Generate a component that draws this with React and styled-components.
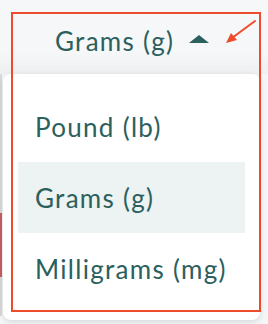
import React from "react";
import styled, { createGlobalStyle } from "styled-components";

const Global = createGlobalStyle`
  html, body {
    margin: 0;
    padding: 0;
    background: #f5f6f8;
  }
  body {
    font-family: "Lato", "Open Sans", sans-serif;
  }
`;

const Page = styled.div`
  position: relative;
  width: 268px;
  height: 324px;
  overflow: hidden;
  background: #f5f6f8;
  display: flex;
  flex-direction: column;
`;

const Header = styled.div`
  height: 74px;
  display: flex;
  align-items: center;
  padding: 8px 0 0 55px;
  box-sizing: border-box;
  gap: 15px;
  background: linear-gradient(#f6f7f9 70%, #eeeff1);
`;

const Label = styled.span`
  font-size: 26px;
  color: #2b605d;
  letter-spacing: 1.3px;
`;

const Caret = styled.span`
  width: 0;
  height: 0;
  border-left: 10px solid transparent;
  border-right: 10px solid transparent;
  border-bottom: 8px solid #2b605d;
  margin-top: -4px;
`;

const Body = styled.div`
  display: flex;
  align-items: flex-start;
  gap: 1px;
`;

const Edge = styled.div`
  width: 2px;
  height: 242px;
  padding-top: 139px;
  box-sizing: border-box;
  background: #d9d9d9;
`;

const EdgeMark = styled.div`
  height: 64px;
  background: #c4605e;
`;

const Menu = styled.ul`
  list-style: none;
  margin: 0;
  width: 257px;
  box-sizing: border-box;
  padding: 17px 15px 16px;
  background: #fff;
  border-radius: 8px;
  box-shadow: 0 2px 6px rgba(0, 0, 0, 0.12);
`;

const Item = styled.li`
  height: 71px;
  display: flex;
  align-items: center;
  padding-left: 17px;
  font-size: 26px;
  color: #2b605d;
  letter-spacing: 1.3px;
  background: ${(p) => (p.$active ? "#edf2f2" : "transparent")};
`;

const Highlight = styled.div`
  position: absolute;
  left: 11px;
  top: 12px;
  width: 250px;
  height: 300px;
  box-sizing: border-box;
  border: 2px solid #ee4a2c;
  pointer-events: none;
`;

const Arrow = styled.svg`
  position: absolute;
  left: 222px;
  top: 18px;
`;

const units = ["Pound (lb)", "Grams (g)", "Milligrams (mg)"];

export default function App() {
  return (
    <Page>
      <Global />
      <Header>
        <Label>Grams (g)</Label>
        <Caret />
      </Header>
      <Body>
        <Edge>
          <EdgeMark />
        </Edge>
        <Menu>
          {units.map((u) => (
            <Item key={u} $active={u === "Grams (g)"}>
              {u}
            </Item>
          ))}
        </Menu>
      </Body>
      <Highlight />
      <Arrow width="36" height="28" viewBox="0 0 36 28">
        <line x1="33" y1="3" x2="10" y2="20" stroke="#ee4a2c" strokeWidth="2" strokeLinecap="round" />
        <polygon points="4,25 9,15 15,22" fill="#ee4a2c" />
      </Arrow>
    </Page>
  );
}
